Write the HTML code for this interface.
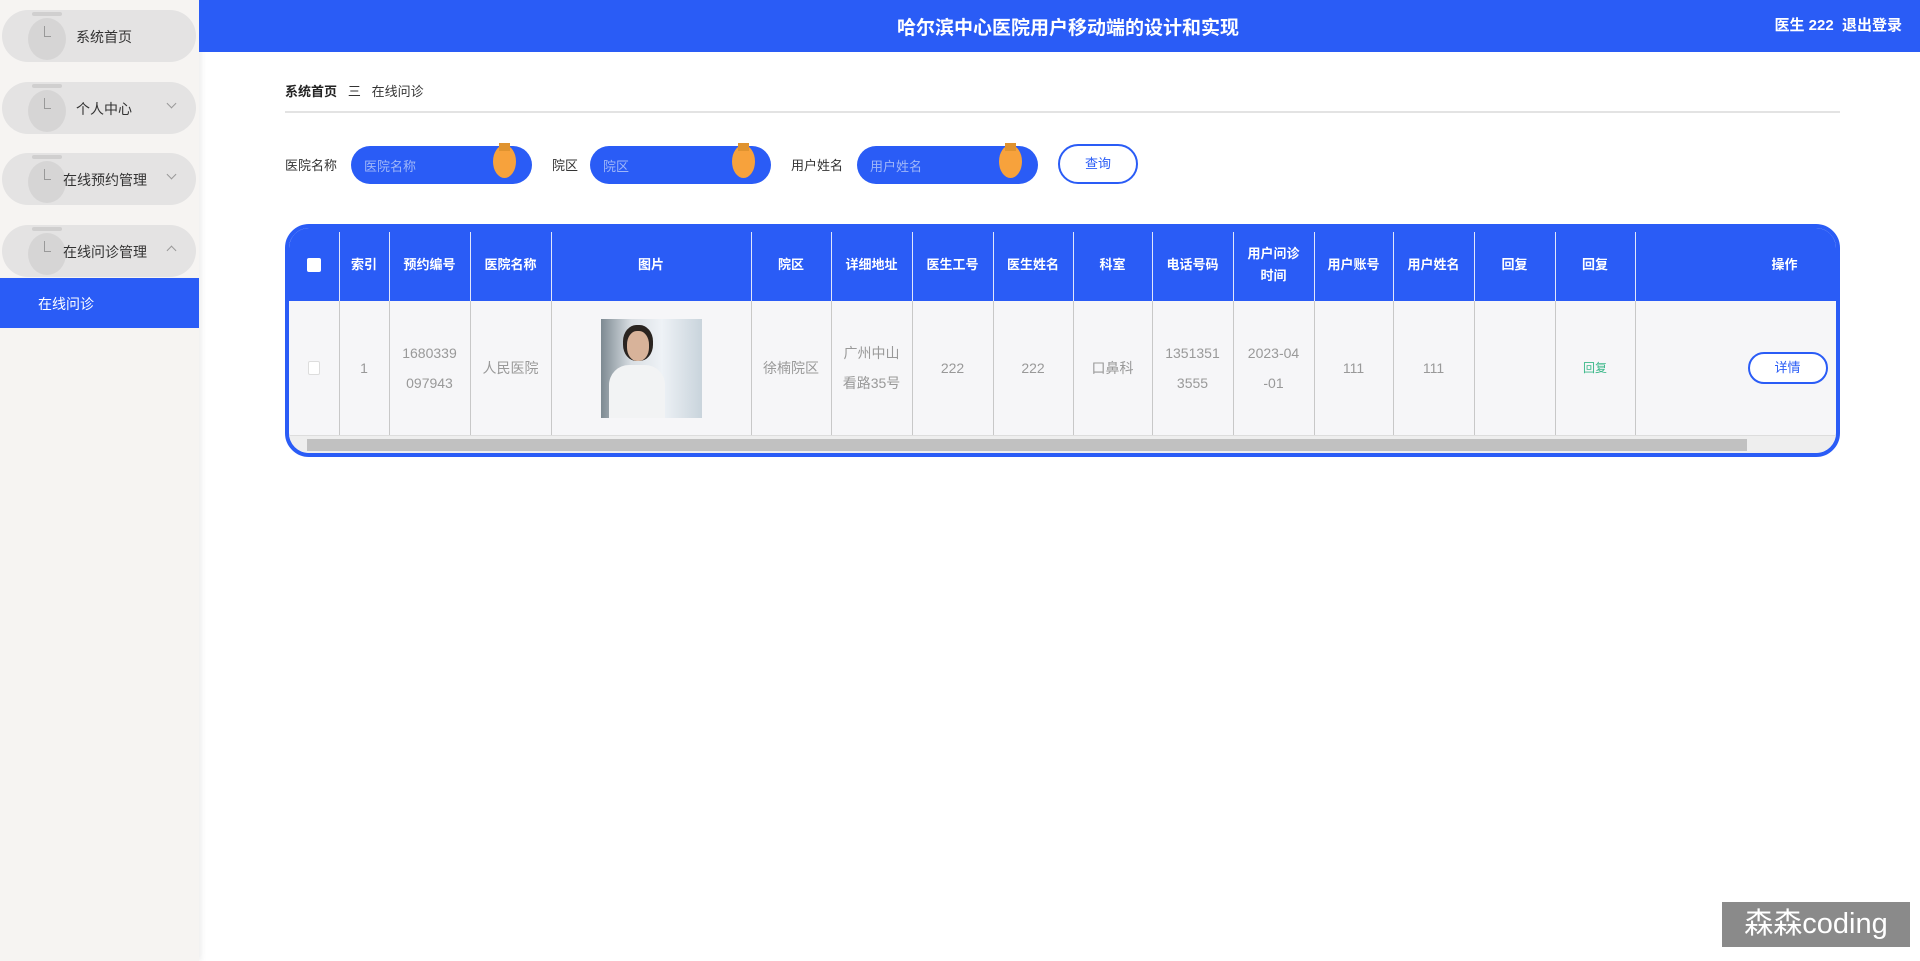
<!DOCTYPE html>
<html><head><meta charset="utf-8"><style>
*{margin:0;padding:0;box-sizing:border-box}
body{width:1920px;height:961px;overflow:hidden;background:#fff;font-family:"Liberation Sans","Noto Sans CJK SC",sans-serif;position:relative}
.side{position:absolute;left:0;top:0;width:199px;height:961px;background:#f6f4f2;box-shadow:2px 0 6px rgba(0,0,0,.08)}
.pill{position:absolute;left:2px;width:194px;height:52px;border-radius:26px;background:#e4e3e3}
.pill .c{position:absolute;left:26px;top:8px;width:38px;height:42px;border-radius:50%;background:#d6d5d5}
.pill .c:before{content:"";position:absolute;left:4px;top:-6px;width:30px;height:4px;background:#d0cfcf;border-radius:2px}
.pill .c:after{content:"";position:absolute;left:16px;top:8px;width:6px;height:10px;border-left:1px solid #999;border-bottom:1px solid #999}
.pill span{position:absolute;top:17px;font-size:14px;color:#333}
.pill i{position:absolute;left:166px;top:18px;width:7px;height:7px;border-right:1px solid #999;border-bottom:1px solid #999;transform:rotate(45deg)}
.pill i.up{top:22px;transform:rotate(-135deg)}
.act{position:absolute;left:0;top:278px;width:199px;height:50px;background:#2a5cf6;color:#fff;font-size:14px;padding:16px 0 0 38px}
.hdr{position:absolute;left:199px;top:0;right:0;height:52px;background:#2a5cf6;color:#fff;font-weight:bold}
.hdr .t{position:absolute;left:0;width:1738px;text-align:center;top:13px;font-size:19px}
.hdr .r{position:absolute;right:18px;top:14px;font-size:15px}
.bc{position:absolute;left:285px;top:81px;font-size:13px;color:#333}
.bc b{color:#222}
.line{position:absolute;left:285px;top:111px;width:1555px;height:2px;background:#e3e3e3}
.lab{position:absolute;top:155px;font-size:13px;color:#333}
.inp{position:absolute;top:146px;height:38px;width:181px;border-radius:19px;background:#2a5cf6;color:#9fb6f8;font-size:13px;padding:10px 0 0 13px}
.inp:after{content:"";position:absolute;right:16px;top:-1px;width:23px;height:33px;border-radius:50%;background:#f7a23c}
.inp:before{content:"";position:absolute;right:22px;top:-3px;width:11px;height:8px;background:#e0932f;z-index:1}
.btn{position:absolute;left:1058px;top:144px;width:80px;height:40px;border:2px solid #2a5cf6;border-radius:20px;color:#2a5cf6;font-size:13px;text-align:center;line-height:36px}
.tbl{position:absolute;left:285px;top:224px;width:1555px;height:233px;border:4px solid #2a5cf6;border-radius:24px;overflow:hidden;background:#f6f6f8}
.th{position:absolute;left:0;top:0;width:100%;height:73px;background:#2a5cf6}
.col{position:absolute;top:4px;height:207px;border-left:1px solid #c8c8c8}
.col.h{height:69px;border-left:1px solid #e0e6fb;top:4px}
.ht{position:absolute;top:0;height:73px;display:flex;align-items:center;justify-content:center;color:#fff;font-weight:bold;font-size:13px;text-align:center;line-height:22px}
.bt{position:absolute;top:73px;height:134px;display:flex;align-items:center;justify-content:center;color:#999;font-size:14px;text-align:center;line-height:30px}
.sb{position:absolute;left:0;top:207px;width:100%;height:18px;background:#eee;border-top:1px solid #ddd}
.sb div{position:absolute;left:18px;top:3px;width:1440px;height:12px;background:#c1c1c1}
.wm{position:absolute;left:1722px;top:902px;width:188px;height:45px;background:#8a8a8a;color:#fff;font-size:29px;text-align:center;line-height:45px}
</style></head><body>
<div class="side">
<div class="pill" style="top:10px"><div class="c"></div><span style="left:74px">系统首页</span></div>
<div class="pill" style="top:82px"><div class="c"></div><span style="left:74px">个人中心</span><i></i></div>
<div class="pill" style="top:153px"><div class="c"></div><span style="left:61px">在线预约管理</span><i></i></div>
<div class="pill" style="top:225px"><div class="c"></div><span style="left:61px">在线问诊管理</span><i class="up"></i></div>
<div class="act">在线问诊</div>
</div>
<div class="hdr"><div class="t">哈尔滨中心医院用户移动端的设计和实现</div><div class="r">医生 222 &nbsp;退出登录</div></div>
<div class="bc"><b>系统首页</b> &nbsp;&nbsp;三&nbsp;&nbsp; 在线问诊</div>
<div class="line"></div>
<div class="lab" style="left:285px">医院名称</div><div class="inp" style="left:351px">医院名称</div>
<div class="lab" style="left:552px">院区</div><div class="inp" style="left:590px">院区</div>
<div class="lab" style="left:791px">用户姓名</div><div class="inp" style="left:857px">用户姓名</div>
<div class="btn">查询</div>
<div class="tbl">
<div class="th"></div>
<div class="col h" style="left:50px"></div><div class="col h" style="left:100px"></div><div class="col h" style="left:181px"></div><div class="col h" style="left:262px"></div><div class="col h" style="left:462px"></div><div class="col h" style="left:542px"></div><div class="col h" style="left:623px"></div><div class="col h" style="left:704px"></div><div class="col h" style="left:784px"></div><div class="col h" style="left:863px"></div><div class="col h" style="left:944px"></div><div class="col h" style="left:1025px"></div><div class="col h" style="left:1104px"></div><div class="col h" style="left:1185px"></div><div class="col h" style="left:1266px"></div><div class="col h" style="left:1346px"></div>
<div class="col" style="left:50px;top:73px;height:134px"></div><div class="col" style="left:100px;top:73px;height:134px"></div><div class="col" style="left:181px;top:73px;height:134px"></div><div class="col" style="left:262px;top:73px;height:134px"></div><div class="col" style="left:462px;top:73px;height:134px"></div><div class="col" style="left:542px;top:73px;height:134px"></div><div class="col" style="left:623px;top:73px;height:134px"></div><div class="col" style="left:704px;top:73px;height:134px"></div><div class="col" style="left:784px;top:73px;height:134px"></div><div class="col" style="left:863px;top:73px;height:134px"></div><div class="col" style="left:944px;top:73px;height:134px"></div><div class="col" style="left:1025px;top:73px;height:134px"></div><div class="col" style="left:1104px;top:73px;height:134px"></div><div class="col" style="left:1185px;top:73px;height:134px"></div><div class="col" style="left:1266px;top:73px;height:134px"></div><div class="col" style="left:1346px;top:73px;height:134px"></div>
<div class="ht" style="left:0;width:50px"><div style="width:14px;height:14px;background:#fff;border-radius:2px"></div></div>
<div class="ht" style="left:50px;width:50px">索引</div>
<div class="ht" style="left:100px;width:81px">预约编号</div>
<div class="ht" style="left:181px;width:81px">医院名称</div>
<div class="ht" style="left:262px;width:200px">图片</div>
<div class="ht" style="left:462px;width:80px">院区</div>
<div class="ht" style="left:542px;width:81px">详细地址</div>
<div class="ht" style="left:623px;width:81px">医生工号</div>
<div class="ht" style="left:704px;width:80px">医生姓名</div>
<div class="ht" style="left:784px;width:79px">科室</div>
<div class="ht" style="left:863px;width:81px">电话号码</div>
<div class="ht" style="left:944px;width:81px">用户问诊<br>时间</div>
<div class="ht" style="left:1025px;width:79px">用户账号</div>
<div class="ht" style="left:1104px;width:81px">用户姓名</div>
<div class="ht" style="left:1185px;width:81px">回复</div>
<div class="ht" style="left:1266px;width:80px">回复</div>
<div class="ht" style="left:1346px;width:199px;padding-left:100px">操作</div>
<div class="bt" style="left:0;width:50px"><div style="width:12px;height:14px;border:1px solid #ddd;background:#fff;border-radius:2px"></div></div>
<div class="bt" style="left:50px;width:50px">1</div>
<div class="bt" style="left:100px;width:81px">1680339<br>097943</div>
<div class="bt" style="left:181px;width:81px">人民医院</div>
<div class="bt" style="left:262px;width:200px"><div style="width:101px;height:99px;background:linear-gradient(90deg,#7d8a92 0,#d9dee3 30%,#eef2f6 60%,#c9d4dc 100%);position:relative;overflow:hidden"><div style="position:absolute;left:22px;top:6px;width:30px;height:36px;border-radius:45%;background:#2a2420"></div><div style="position:absolute;left:26px;top:12px;width:22px;height:30px;border-radius:45%;background:#d8b39a"></div><div style="position:absolute;left:8px;top:46px;width:56px;height:60px;border-radius:20px 20px 0 0;background:#f2f3f4"></div></div></div>
<div class="bt" style="left:462px;width:80px">徐楠院区</div>
<div class="bt" style="left:542px;width:81px">广州中山<br>看路35号</div>
<div class="bt" style="left:623px;width:81px">222</div>
<div class="bt" style="left:704px;width:80px">222</div>
<div class="bt" style="left:784px;width:79px">口鼻科</div>
<div class="bt" style="left:863px;width:81px">1351351<br>3555</div>
<div class="bt" style="left:944px;width:81px">2023-04<br>-01</div>
<div class="bt" style="left:1025px;width:79px">111</div>
<div class="bt" style="left:1104px;width:81px">111</div>
<div class="bt" style="left:1266px;width:80px;color:#3cb88a;font-size:12px">回复</div>
<div class="bt" style="left:1346px;width:199px"><div style="margin-left:106px;width:80px;height:32px;border:2px solid #2a5cf6;border-radius:16px;color:#2a5cf6;font-size:13px;line-height:28px;background:#fff">详情</div></div>
<div class="sb"><div></div></div>
</div>
<div class="wm">森森coding</div>
</body></html>
